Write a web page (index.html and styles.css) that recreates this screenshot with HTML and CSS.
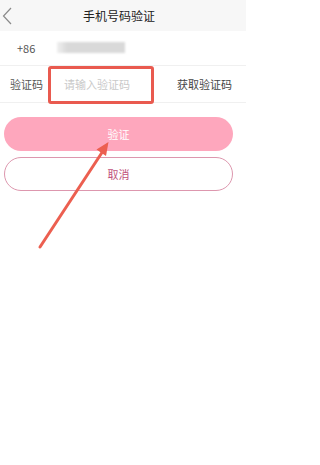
FILE: index.html
```html
<!DOCTYPE html>
<html lang="zh-CN">
<head>
<meta charset="utf-8">
<title>手机号码验证</title>
<link rel="stylesheet" href="styles.css">
</head>
<body>
<div class="page">
  <header class="header">
    <span class="back">
      <svg width="10" height="18" viewBox="0 0 10 18"><path d="M9 1 L1.5 9 L9 17" fill="none" stroke="#8a8a8a" stroke-width="1.2"/></svg>
    </span>
    <h1 class="title">手机号码验证</h1>
    <span class="spacer"></span>
  </header>
  <div class="row phone-row">
    <span class="code">+86</span>
    <span class="phone-blur"></span>
  </div>
  <div class="row code-row">
    <span class="label">验证码</span>
    <span class="input">请输入验证码</span>
    <span class="get-code">获取验证码</span>
    <span class="highlight"></span>
  </div>
  <div class="actions">
    <button class="btn btn-primary">验证</button>
    <button class="btn btn-outline">取消</button>
  </div>
  <svg class="arrow" width="246" height="465" viewBox="0 0 246 465">
    <line x1="40" y1="247" x2="103" y2="151" stroke="#ec5f50" stroke-width="3" stroke-linecap="round"/>
    <polygon points="108.5,142 96.5,149.5 106,156" fill="#ec5f50"/>
  </svg>
</div>
</body>
</html>
```

FILE: styles.css
```css
* { box-sizing: border-box; }
html, body { margin: 0; padding: 0; background: #fff; }
body {
  font-family: "Noto Sans CJK SC", "Noto Sans", sans-serif;
  width: 246px;
  height: 465px;
  overflow: hidden;
}
.page { position: relative; width: 246px; height: 465px; }
.header {
  height: 31px;
  background: #f7f7f7;
  display: grid;
  grid-template-columns: 30px 1fr 38px;
  align-items: center;
}
.back { display: flex; align-items: center; padding-left: 2px; padding-top: 1px; }
.title {
  margin: 0;
  text-align: center;
  font-size: 12px;
  font-weight: 400;
  color: #222;
  line-height: 1;
}
.row {
  display: flex;
  align-items: center;
  border-bottom: 1px solid #f0f0f0;
  font-size: 11px;
  color: #555;
}
.phone-row { height: 35px; }
.code { padding-left: 17px; width: 57px; }
.phone-blur {
  width: 68px;
  height: 11px;
  margin-top: -2px;
  background: linear-gradient(90deg, #f0f0f0 0%, #d9d9d9 15%, #d9d9d9 100%);
  filter: blur(1.2px);
}
.code-row { height: 37px; position: relative; }
.label { padding-left: 10px; width: 51px; }
.input { color: #c9c9c9; padding-left: 13px; flex: 1; }
.get-code { padding-right: 14px; color: #444; }
.highlight {
  position: absolute;
  left: 48px;
  top: 0;
  width: 106px;
  height: 38px;
  border: 3px solid #e95a4f;
  border-radius: 3px;
}
.actions {
  display: flex;
  flex-direction: column;
  gap: 6px;
  padding: 14px 13px 0 4px;
}
.btn {
  height: 34px;
  border-radius: 17px;
  font-family: inherit;
  font-size: 11px;
  padding: 0;
}
.btn-primary { background: #fea7bd; color: #fff; border: none; }
.btn-outline { background: #fff; color: #c0527a; border: 1px solid #dd97ae; }
.arrow { position: absolute; left: 0; top: 0; pointer-events: none; }
```
